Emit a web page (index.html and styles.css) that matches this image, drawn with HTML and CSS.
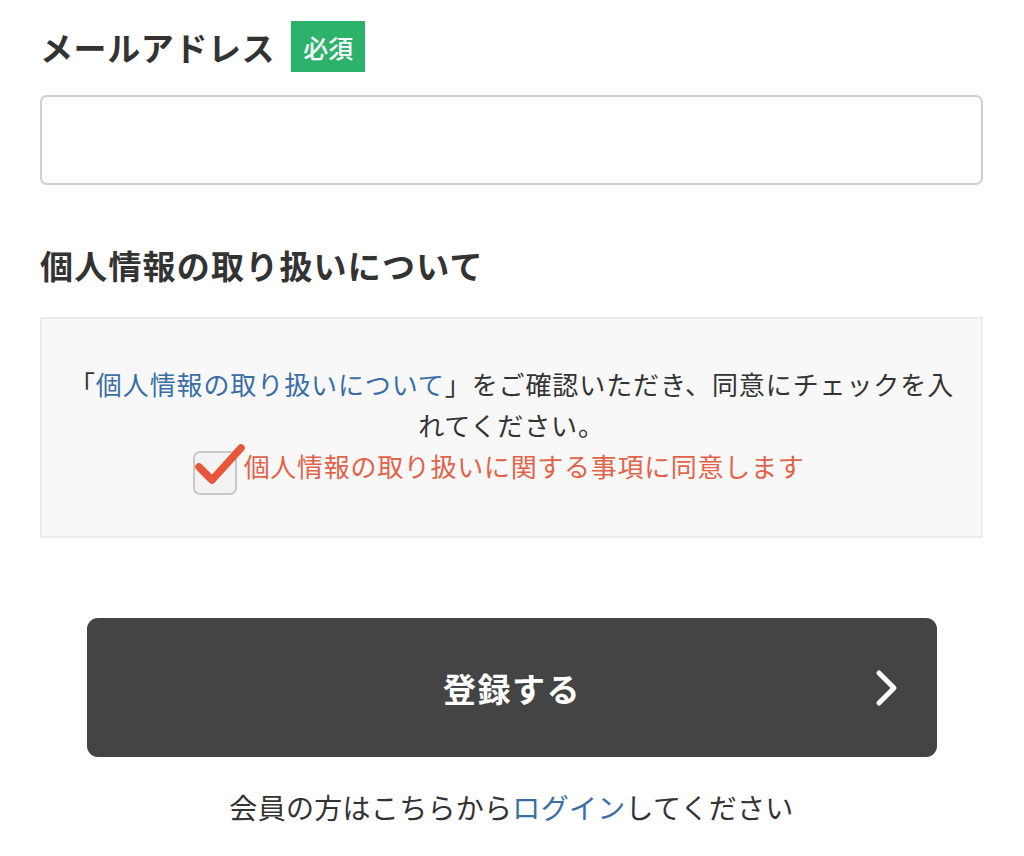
FILE: index.html
```html
<!DOCTYPE html>
<html lang="ja">
<head>
<meta charset="utf-8">
<link rel="stylesheet" href="styles.css">
</head>
<body>
<div class="page">
  <div class="field-label">
    <span class="label-text">メールアドレス</span>
    <span class="badge">必須</span>
  </div>
  <div class="input-box"></div>

  <h2 class="section-title">個人情報の取り扱いについて</h2>
  <div class="privacy-box">
    <p class="privacy-text">「<a class="link">個人情報の取り扱いについて</a>」をご確認いただき、同意にチェックを入れてください。</p>
    <label class="agree">
      <span class="checkbox">
        <svg class="check" viewBox="0 0 52 46" width="52" height="46"><path d="M5 24 L18 37 L47 5" fill="none" stroke="#e8573b" stroke-width="7.5" stroke-linecap="round" stroke-linejoin="round"/></svg>
      </span>
      <span class="agree-text">個人情報の取り扱いに関する事項に同意します</span>
    </label>
  </div>

  <div class="button-wrap">
    <button class="submit">
      <span class="submit-text">登録する</span>
      <svg class="chevron" viewBox="0 0 24 38" width="24" height="38"><path d="M4 4 L19 19 L4 34" fill="none" stroke="#fff" stroke-width="5" stroke-linecap="round" stroke-linejoin="round"/></svg>
    </button>
  </div>
  <p class="login-note">会員の方はこちらから<a class="link">ログイン</a>してください</p>
</div>
</body>
</html>
```

FILE: styles.css
```css
* { box-sizing: border-box; }
html, body { margin: 0; padding: 0; background: #fff; }
body {
  font-family: "Noto Sans CJK JP", "Noto Sans", sans-serif;
  color: #333;
}
.page {
  width: 1024px;
  padding: 21px 41px 0 40px;
}
.field-label {
  display: flex;
  align-items: center;
  gap: 16px;
  height: 51px;
}
.label-text {
  font-size: 33px;
  font-weight: 700;
  letter-spacing: 0.6px;
  color: #333;
}
.badge {
  display: inline-flex;
  align-items: center;
  justify-content: center;
  width: 74px;
  height: 51px;
  background: #2db26c;
  color: #fff;
  font-size: 25px;
  font-weight: 500;
}
.input-box {
  margin-top: 23px;
  height: 90px;
  border: 2px solid #cfcfcf;
  border-radius: 7px;
  background: #fff;
}
.section-title {
  margin: 52px 0 0;
  font-size: 33px;
  font-weight: 700;
  line-height: 56px;
  letter-spacing: 1.2px;
  color: #333;
}
.privacy-box {
  margin-top: 24px;
  height: 221px;
  background: #f8f8f8;
  border: 2px solid #ebebeb;
  padding: 44px 26px 0 26px;
  text-align: center;
}
.privacy-text {
  margin: 0;
  font-size: 26px;
  line-height: 41px;
  color: #333;
  letter-spacing: 0.9px;
}
.link { color: #3a6ea5; text-decoration: none; }
.agree {
  display: inline-flex;
  align-items: flex-start;
  gap: 7px;
  margin-right: 26px;
}
.checkbox {
  position: relative;
  display: inline-block;
  width: 44px;
  height: 44px;
  margin-top: 6px;
  border: 2px solid #c8c8c8;
  border-radius: 7px;
  background: #f3f3f3;
}
.check {
  position: absolute;
  left: -1px;
  top: -10px;
}
.agree-text {
  font-size: 26px;
  line-height: 41px;
  color: #e2624a;
  letter-spacing: 0.7px;
}
.button-wrap {
  margin-top: 80px;
  padding: 0 46px 0 47px;
}
.submit {
  position: relative;
  display: flex;
  align-items: center;
  justify-content: center;
  width: 100%;
  height: 139px;
  border: none;
  border-radius: 11px;
  background: #444;
  font-family: inherit;
  cursor: pointer;
}
.submit-text {
  color: #fff;
  font-size: 33px;
  font-weight: 700;
  letter-spacing: 1.5px;
}
.chevron {
  position: absolute;
  right: 38px;
  top: 50%;
  transform: translateY(-50%);
}
.login-note {
  margin: 28px 0 0;
  text-align: center;
  font-size: 28px;
  line-height: 44px;
  color: #333;
  letter-spacing: 0.3px;
}
```
